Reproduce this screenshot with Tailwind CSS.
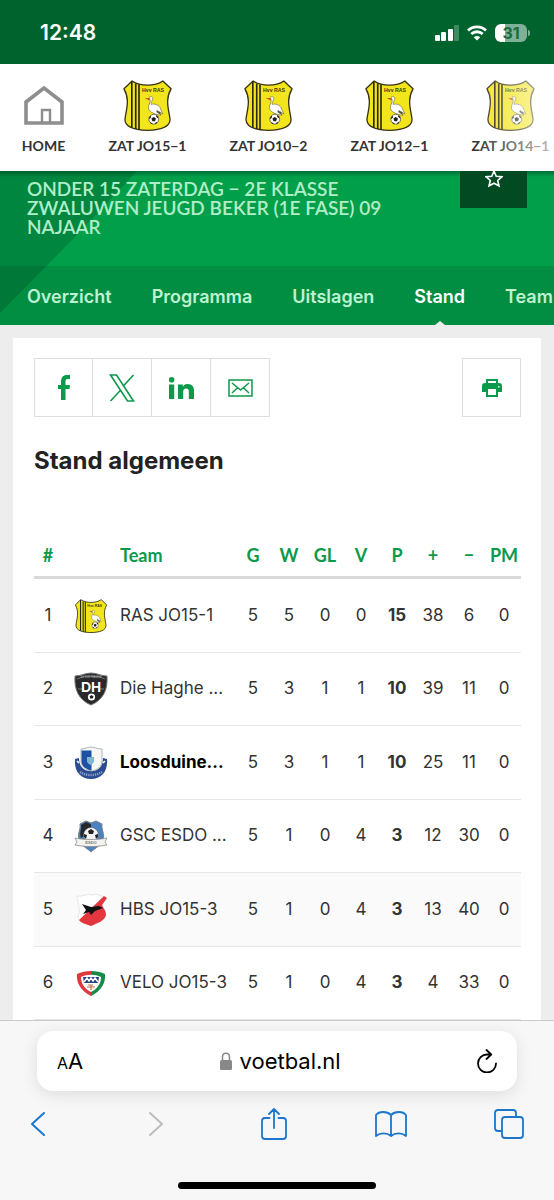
<!DOCTYPE html>
<html lang="nl">
<head>
  <meta charset="UTF-8">
  <meta name="viewport" content="width=device-width, initial-scale=1.0">
  <title>Stand - voetbal.nl</title>
  <script src="https://cdn.jsdelivr.net/npm/@tailwindcss/browser@4"></script>
</head>
<body class="h-screen flex flex-col overflow-hidden bg-[#ededed] font-['Inter',sans-serif] text-[#333]">

  <!-- Shared club crest -->
  <svg class="hidden" xmlns="http://www.w3.org/2000/svg">
    <symbol id="crest-ras" viewBox="0 0 150 156">
      <path d="M28 3C52 20 98 20 122 3L147 27C128 60 140 90 144 120C144 146 112 153 75 154C38 153 6 146 6 120C10 90 22 60 3 27Z" fill="#f3e51c" stroke="#37320f" stroke-width="4" stroke-linejoin="round"/>
      <path d="M27 5V146M39 11V150M49 14V152" stroke="#2b270c" stroke-width="5"/>
      <text x="92" y="38" text-anchor="middle" font-family="Liberation Sans, sans-serif" font-weight="700" font-size="16" fill="#3a350f">Hvv RAS</text>
      <path d="M82 56L67 55L81 63Z" fill="#d8391e"/>
      <path d="M80 53C86 48 93 52 91 59C89 66 84 70 87 75C96 71 108 76 113 84L122 104L111 97L116 108C102 106 82 100 78 88C76 78 85 68 83 61Z" fill="#fff" stroke="#6b6744" stroke-width="2"/>
      <path d="M104 92L121 105L112 97L116 108L102 98Z" fill="#55513a"/>
      <path d="M98 104L96 114M105 105L108 114" stroke="#c7932a" stroke-width="2"/>
      <circle cx="94" cy="120" r="15" fill="#fff" stroke="#333" stroke-width="2"/>
      <path d="M94 113L101 118L98 126H90L87 118ZM80 115L85 109L86 114L81 120ZM103 108L108 114L106 117L101 112ZM83 129L88 131L91 135L85 133ZM105 128L99 131L97 135L103 132Z" fill="#1c1c1c"/>
    </symbol>
  </svg>

  <!-- Status bar -->
  <div class="h-16 shrink-0 bg-[#00632e] flex items-center justify-between pl-10 pr-6 pt-0.5 text-white">
    <span class="text-[21px] font-semibold">12:48</span>
    <div class="flex items-center gap-2">
      <svg class="w-6 h-4" viewBox="0 0 24 16" fill="#fff">
        <rect x="0" y="10" width="5" height="6" rx="1"/>
        <rect x="6" y="7" width="5" height="9" rx="1"/>
        <rect x="13" y="4" width="5" height="12" rx="1"/>
        <rect x="19" y="0" width="5" height="16" rx="1" fill-opacity=".25"/>
      </svg>
      <svg class="w-5 h-4" viewBox="0 0 20 16" fill="none" stroke="#fff" stroke-width="2.8">
        <path d="M1 5.5C6 .7 14 .7 19 5.5M4.3 9C7.6 6 12.4 6 15.7 9"/>
        <path d="M10 15.5L6.8 12.3C8.6 10.7 11.4 10.7 13.2 12.3Z" fill="#fff" stroke="none"/>
      </svg>
      <div class="flex items-center gap-px">
        <span class="flex h-[18px] w-8 items-center justify-center rounded-md bg-linear-to-r from-white from-30% to-[#80b196] to-30% text-base font-bold leading-none text-[#1b6b3f]">31</span>
        <span class="h-1.5 w-0.5 rounded-r-full bg-[#80b196]"></span>
      </div>
    </div>
  </div>

  <!-- Team shortcuts -->
  <nav class="relative h-[107px] shrink-0 bg-white flex overflow-hidden font-['Lato',sans-serif] text-sm font-bold text-[#333]">
    <a href="#" class="w-[87px] shrink-0 flex flex-col items-center pt-4">
      <svg class="h-[51px] w-10" viewBox="0 0 40 51" fill="none" stroke="#8e8e8e" stroke-width="3.6">
        <path d="M2 43V22L20 8L38 22V43Z"/>
        <path d="M18 43V30H26V43" stroke-width="2.4"/>
      </svg>
      <span class="mt-[5px]">HOME</span>
    </a>
    <a href="#" class="w-[121px] shrink-0 flex flex-col items-center pt-4">
      <svg class="h-[51px] w-[51px]"><use href="#crest-ras"/></svg>
      <span class="mt-[5px]">ZAT JO15−1</span>
    </a>
    <a href="#" class="w-[121px] shrink-0 flex flex-col items-center pt-4">
      <svg class="h-[51px] w-[51px]"><use href="#crest-ras"/></svg>
      <span class="mt-[5px]">ZAT JO10−2</span>
    </a>
    <a href="#" class="w-[121px] shrink-0 flex flex-col items-center pt-4">
      <svg class="h-[51px] w-[51px]"><use href="#crest-ras"/></svg>
      <span class="mt-[5px]">ZAT JO12−1</span>
    </a>
    <a href="#" class="w-[121px] shrink-0 flex flex-col items-center pt-4">
      <svg class="h-[51px] w-[51px]"><use href="#crest-ras"/></svg>
      <span class="mt-[5px]">ZAT JO14−1</span>
    </a>
    <div class="absolute inset-y-0 right-0 w-20 bg-linear-to-r from-white/0 to-white/70"></div>
  </nav>

  <!-- Competition header -->
  <header class="relative shrink-0 overflow-hidden bg-[#029f4a]">
    <svg class="absolute left-0 top-0 h-[154px] w-36" viewBox="0 0 144 154">
      <path d="M0 0H137L75 66L0 142Z" fill="#00803c" fill-opacity=".8"/>
    </svg>
    <div class="absolute inset-x-0 top-0 h-1.5 bg-linear-to-b from-black/30 to-black/0"></div>
    <div class="relative flex items-start justify-between pl-[27px] pr-[27px] h-[95px]">
      <h1 class="mt-2 font-['Lato',sans-serif] text-[19px]/[19px] font-semibold uppercase text-[#b0eec8]">Onder 15 Zaterdag − 2e Klasse<br>Zwaluwen Jeugd Beker (1e fase) 09<br>najaar</h1>
      <button aria-label="Favoriet" class="h-[37px] w-[67px] shrink-0 bg-[#024a22] flex justify-center">
        <svg class="h-[18px] w-[18px]" viewBox="0 0 18 18" fill="none" stroke="#fff" stroke-width="1.6">
          <path d="M9 0L11.2 5.2L17 5.7L12.7 9.5L14 15L9 12.2L4 15L5.3 9.5L1 5.7L6.8 5.2Z"/>
        </svg>
      </button>
    </div>
    <nav class="relative flex h-[59px] items-center gap-10 bg-black/10 pl-[27px] pt-0.5 text-lg font-semibold text-[#bdf3d2]">
      <a href="#">Overzicht</a>
      <a href="#">Programma</a>
      <a href="#">Uitslagen</a>
      <a href="#" class="relative flex h-full items-center text-white">Stand
        <svg class="absolute bottom-0 left-1/2 -translate-x-1/2 h-1 w-2.5" viewBox="0 0 10 4"><path d="M0 4L5 0L10 4Z" fill="#ededed"/></svg>
      </a>
      <a href="#">Team</a>
    </nav>
  </header>

  <!-- Standings -->
  <main class="min-h-0 flex-1 overflow-hidden px-[13px] pt-[13px]">
    <section class="min-h-full bg-white pl-[21px] pr-5 pt-5">
      <div class="flex justify-between">
        <div class="flex divide-x divide-[#dedede] border border-[#dedede]">
          <a href="#" aria-label="Facebook" class="flex h-[57px] w-[58px] items-center justify-center">
            <svg class="h-[25px] w-3" viewBox="0 0 12 25" fill="#0b9a4b"><path d="M3 25V14H0V10H3V7C3 2.5 5.2 0 9 0H12V4H9.5C8 4 7.5 5 7.5 6.5V10H12L11.5 14H7.5V25Z"/></svg>
          </a>
          <a href="#" aria-label="X" class="flex h-[57px] w-[59px] items-center justify-center">
            <svg class="h-7 w-[26px]" viewBox="0 0 26 28" fill="none" stroke="#0b9a4b" stroke-width="1.6"><path d="M1.5 1H7.5L24.5 27H18.5ZM24.5 1L14.5 11.8M11.5 16.2L1.5 27"/></svg>
          </a>
          <a href="#" aria-label="LinkedIn" class="flex h-[57px] w-[59px] items-center justify-center">
            <svg class="h-[22px] w-[25px]" viewBox="0 0 25 22" fill="#0b9a4b"><path d="M0 7.5H5.2V22H0ZM9 7.5H13.8V9.5C15 7.8 16.5 7 18.5 7C23.5 7 25 10 25 14V22H19.8V14.8C19.8 12.5 19 11.5 17.2 11.5C15 11.5 14.2 13 14.2 15V22H9Z"/><circle cx="2.6" cy="2.8" r="2.8"/></svg>
          </a>
          <a href="#" aria-label="E-mail" class="flex h-[57px] w-[58px] items-center justify-center">
            <svg class="h-[18px] w-[25px]" viewBox="0 0 25 18" fill="none" stroke="#0b9a4b" stroke-width="1.5"><path d="M1 1H24V17H1ZM4 4L12.5 11L21 4M4 14L9.5 8.800M21 14L15.500 8.800"/></svg>
          </a>
        </div>
        <button aria-label="Afdrukken" class="flex h-[59px] w-[59px] items-center justify-center border border-[#dedede]">
          <svg class="h-[18px] w-5" viewBox="0 0 20 18" fill="#0b9a4b"><path fill-rule="evenodd" d="M4 0H16V4H17C19 4 20 5 20 7V13H16V18H4V13H0V7C0 5 1 4 3 4H4ZM6 2V4H14V2ZM6 10V16H14V10ZM16 7V8.5H17.5V7Z"/></svg>
        </button>
      </div>

      <h2 class="mt-7 text-2xl/8 font-bold text-[#222]">Stand algemeen</h2>

      <table class="mt-14 w-full table-fixed border-separate border-spacing-0 text-center text-[17px] [&_td]:border-b [&_td]:border-[#e6e6e6] [&_td]:p-0 [&_th]:border-b-3 [&_th]:border-[#dadada] [&_th]:p-0">
        <thead class="font-['Lato',sans-serif] text-lg text-[#0b9a4b]">
          <tr class="h-[46px]">
            <th class="w-7">#</th>
            <th class="w-[58px]"></th>
            <th class="text-left">Team</th>
            <th class="w-9">G</th>
            <th class="w-9">W</th>
            <th class="w-9">GL</th>
            <th class="w-9">V</th>
            <th class="w-9">P</th>
            <th class="w-9">+</th>
            <th class="w-9">−</th>
            <th class="w-[34px]">PM</th>
          </tr>
        </thead>
        <tbody>
          <tr class="h-[74px]">
            <td>1</td>
            <td><svg class="mx-auto h-[34px] w-[34px]"><use href="#crest-ras"/></svg></td>
            <td class="whitespace-nowrap text-left">RAS JO15-1</td>
            <td>5</td><td>5</td><td>0</td><td>0</td><td class="font-bold">15</td><td>38</td><td>6</td><td>0</td>
          </tr>
          <tr class="h-[73px]">
            <td>2</td>
            <td>
              <svg class="mx-auto h-[34px] w-[34px]" viewBox="0 0 34 34">
                <path d="M1 4C7 4 11 1 17 1C23 1 27 4 33 4C34 18 29 28 17 33C5 28 0 18 1 4Z" fill="#29292b" stroke="#777" stroke-width="1"/>
                <path d="M3 7C12 3 22 3 31 7M4 17H8M26 17H30" fill="none" stroke="#77787b" stroke-width="1"/>
                <text x="17" y="6" text-anchor="middle" font-family="Liberation Sans, sans-serif" font-size="3" fill="#bbb">SV DIE HAGHE</text>
                <text x="17" y="20" text-anchor="middle" font-family="Liberation Sans, sans-serif" font-size="14" font-weight="700" fill="#fff">DH</text>
                <circle cx="17.5" cy="25" r="3.6" fill="#fff"/>
                <path d="M17.5 23L19.5 24.5L18.7 26.5H16.3L15.5 24.5Z" fill="#222"/>
              </svg>
            </td>
            <td class="whitespace-nowrap text-left">Die Haghe ...</td>
            <td>5</td><td>3</td><td>1</td><td>1</td><td class="font-bold">10</td><td>39</td><td>11</td><td>0</td>
          </tr>
          <tr class="h-[74px]">
            <td>3</td>
            <td>
              <svg class="mx-auto h-[34px] w-[34px]" viewBox="0 0 34 34">
                <path d="M1 13L5 12C5 20 9 25 17 25C25 25 29 20 29 12L33 13C34 25 28 33 17 33C6 33 0 25 1 13Z" fill="#2c4c91"/>
                <path d="M6 26C12 30 22 30 28 26" fill="none" stroke="#93a5cc" stroke-width="2.4" stroke-dasharray="1.2 1"/>
                <path d="M7 3C11 3 14 1 17 1C20 1 23 3 28 3V15C28 21 23 24 17.5 25C11 24 7 20 7 15Z" fill="#f6f6f2" stroke="#9aa5ad" stroke-width=".8"/>
                <path d="M7.5 4.5H17.5V24.5C11 23 7.5 20 7.5 15Z" fill="#1e50a5"/>
                <path d="M13 11H20V15C20 17 18 18 16.5 19C15 18 13 17 13 15Z" fill="#7fb5ce"/>
                <path d="M3 15L5 17M31 15L29 17" stroke="#fff" stroke-width="1.5"/>
              </svg>
            </td>
            <td class="whitespace-nowrap text-left font-bold text-black">Loosduine...</td>
            <td>5</td><td>3</td><td>1</td><td>1</td><td class="font-bold">10</td><td>25</td><td>11</td><td>0</td>
          </tr>
          <tr class="h-[73px]">
            <td>4</td>
            <td>
              <svg class="mx-auto h-[34px] w-[34px]" viewBox="0 0 34 34">
                <path d="M6 5L12 2L17 4L22 2L28 5C27 11 31 14 29 21C28 26 21 29 17 33C13 29 6 26 5 21C3 14 7 11 6 5Z" fill="#4a83bf" stroke="#777b80" stroke-width="1"/>
                <path d="M7 6L12 3L17 5V12L7 19C5 13 8 10 7 6Z" fill="#25282d"/>
                <circle cx="17" cy="16" r="7.5" fill="#f4f4f4" stroke="#555" stroke-width=".5"/>
                <path d="M17 10L20 12L19 15H15L14 12ZM10 15L13 16L12 20L10 18ZM24 15L21 16L22 20L24 18Z" fill="#222"/>
                <path d="M1 19C11 21 23 21 33 19L31 23L33 26C22 28 12 28 1 26L3 23Z" fill="#f5f3ef" stroke="#8d8b88" stroke-width=".8"/>
                <text x="17" y="24.5" text-anchor="middle" font-family="Liberation Sans, sans-serif" font-size="4" font-weight="700" fill="#777">ESDO</text>
              </svg>
            </td>
            <td class="whitespace-nowrap text-left">GSC ESDO ...</td>
            <td>5</td><td>1</td><td>0</td><td>4</td><td class="font-bold">3</td><td>12</td><td>30</td><td>0</td>
          </tr>
          <tr class="h-[74px] bg-[#fafafa]">
            <td>5</td>
            <td>
              <svg class="mx-auto h-[34px] w-[34px]" viewBox="0 0 34 34">
                <path d="M3 3C9 4 13 0 18 2C23 0 26 3 30 4C29 9 27 12 31 18C34 26 24 30 17 33C11 30 4 29 4 24C7 17 4 12 3 3Z" fill="#fff" stroke="#e5e5e5" stroke-width="1"/>
                <path d="M30 3L33 5L28 12C29 15 32 17 32 22C31 28 23 30 17 33C12 31 7 30 5 27Z" fill="#e3363e"/>
                <path d="M8 11L17 14L25 13L29 15L21 18L17 22L15 19L9 21L12 17Z" fill="#111"/>
              </svg>
            </td>
            <td class="whitespace-nowrap text-left">HBS JO15-3</td>
            <td>5</td><td>1</td><td>0</td><td>4</td><td class="font-bold">3</td><td>13</td><td>40</td><td>0</td>
          </tr>
          <tr class="h-[73px]">
            <td>6</td>
            <td>
              <svg class="mx-auto h-[34px] w-[34px]" viewBox="0 0 34 34">
                <path d="M17 5C12 5 7 6 3 8C2 17 7 25 17 30Z" fill="#dc3a3d"/>
                <path d="M17 5C22 5 27 6 31 8C32 17 27 25 17 30Z" fill="#168a47"/>
                <path d="M7 11C13 8 21 8 27 11C27 18 23 23 17 26C11 23 7 18 7 11Z" fill="#fff"/>
                <path d="M9 11H25L24 17H10Z" fill="#28457f"/>
                <path d="M10 16L13 12L15 15L17 12L19 15L21 12L24 16" fill="none" stroke="#fff" stroke-width="1.5"/>
                <path d="M14 19H19M17 19V24M13 21H21" stroke="#c07448" stroke-width="1.2"/>
              </svg>
            </td>
            <td class="whitespace-nowrap text-left">VELO JO15-3</td>
            <td>5</td><td>1</td><td>0</td><td>4</td><td class="font-bold">3</td><td>4</td><td>33</td><td>0</td>
          </tr>
        </tbody>
      </table>
    </section>
  </main>

  <!-- Browser toolbar -->
  <footer class="h-[180px] shrink-0 flex flex-col border-t border-[#cacaca] bg-[#f7f7f7] pt-2.5">
    <div class="mx-[37px] flex h-[60px] items-center justify-between rounded-2xl bg-white px-5 text-black shadow-[0_4px_16px_rgba(0,0,0,0.1)]">
      <button aria-label="Leesopties" class="flex items-baseline whitespace-nowrap"><span class="text-base">A</span><span class="text-[22px]">A</span></button>
      <div class="flex items-center gap-2 text-[22px]">
        <svg class="h-[18px] w-3" viewBox="0 0 12 18"><rect y="8" width="12" height="10" rx="1.5" fill="#88888b"/><path d="M2.5 9V5C2.5 0 9.5 0 9.5 5V9" fill="none" stroke="#88888b" stroke-width="1.5"/></svg>
        <span>voetbal.nl</span>
      </div>
      <button aria-label="Vernieuwen">
        <svg class="h-6 w-5" viewBox="0 0 20 24" fill="none" stroke="#000" stroke-width="1.8" stroke-linecap="round" stroke-linejoin="round"><path d="M14 5.5H10A9 9 0 1 0 19 14.5M9.5 1L14.2 5.5L9.5 10"/></svg>
      </button>
    </div>
    <div class="mt-[17px] flex justify-between pl-[22px] pr-[29px] text-[#1b76cc]">
      <button aria-label="Vorige" class="flex h-8 w-8 items-center justify-center">
        <svg class="h-6 w-3.5" viewBox="0 0 14 24" fill="none" stroke="currentColor" stroke-width="2" stroke-linecap="round" stroke-linejoin="round"><path d="M13 1L1 12L13 23"/></svg>
      </button>
      <button aria-label="Volgende" class="flex h-8 w-8 items-center justify-center text-[#bdbdbf]">
        <svg class="h-6 w-3.5" viewBox="0 0 14 24" fill="none" stroke="currentColor" stroke-width="2" stroke-linecap="round" stroke-linejoin="round"><path d="M1 1L13 12L1 23"/></svg>
      </button>
      <button aria-label="Delen" class="flex h-8 w-8 items-center justify-center">
        <svg class="h-8 w-[26px]" viewBox="0 0 26 32" fill="none" stroke="currentColor" stroke-width="1.8" stroke-linecap="round" stroke-linejoin="round"><path d="M8.5 10H4C2 10 1 11 1 13V28C1 30 2 31 4 31H22C24 31 25 30 25 28V13C25 11 24 10 22 10H17.5M13 20V1M8 6L13 1L18 6"/></svg>
      </button>
      <button aria-label="Bladwijzers" class="flex h-8 w-8 items-center justify-center">
        <svg class="h-[26px] w-8" viewBox="0 0 32 26" fill="none" stroke="currentColor" stroke-width="1.8" stroke-linejoin="round"><path d="M16 4C12 0 4 0 1 4V25C5 21.5 12 21.5 16 25C20 21.5 27 21.5 31 25V4C28 0 20 0 16 4ZM16 4V25"/></svg>
      </button>
      <button aria-label="Tabbladen" class="flex h-8 w-8 items-center justify-center">
        <svg class="h-[30px] w-[30px]" viewBox="0 0 30 30" fill="none" stroke="currentColor" stroke-width="1.8"><rect x="8" y="8" width="21" height="21" rx="3"/><path d="M8 22H4C2 22 1 21 1 19V4C1 2 2 1 4 1H19C21 1 22 2 22 4V8"/></svg>
      </button>
    </div>
    <div class="mx-auto mb-[11px] mt-auto h-[7px] w-[198px] rounded-full bg-black"></div>
  </footer>
</body>
</html>
